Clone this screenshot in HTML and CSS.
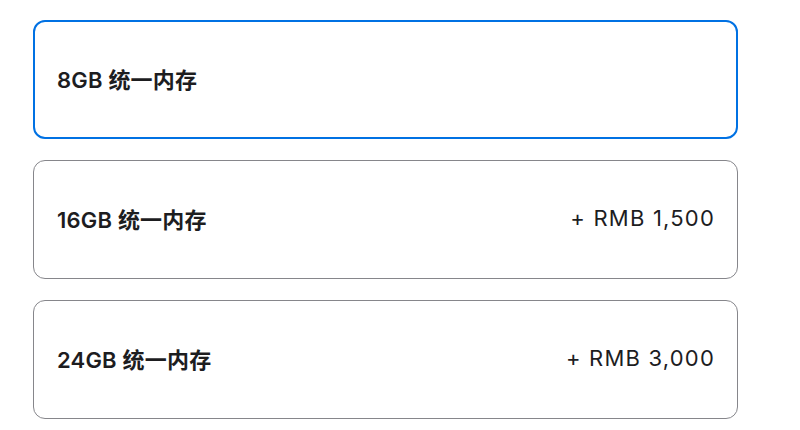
FILE: index.html
```html
<!DOCTYPE html>
<html lang="zh-CN">
<head>
    <meta charset="utf-8">
    <title>统一内存</title>
    <link rel="stylesheet" href="styles.css">
</head>
<body>
    <main class="options">
        <label class="option selected">
            <span class="option-name">8GB 统一内存</span>
        </label>
        <label class="option">
            <span class="option-name">16GB 统一内存</span>
            <span class="option-price">+ RMB 1,500</span>
        </label>
        <label class="option">
            <span class="option-name">24GB 统一内存</span>
            <span class="option-price">+ RMB 3,000</span>
        </label>
    </main>
</body>
</html>
```

FILE: styles.css
```css
body {
    margin: 0;
    background: #fff;
    color: #1d1d1f;
    font-family: Inter, "Noto Sans CJK SC", sans-serif;
}

.options {
    display: flex;
    flex-direction: column;
    gap: 21px;
    width: 705px;
    padding: 20px 0 0 33px;
}

.option {
    box-sizing: border-box;
    height: 119px;
    display: flex;
    align-items: center;
    justify-content: space-between;
    padding: 0 23px 4px;
    border: 1px solid #86868b;
    border-radius: 12px;
    font-size: 22px;
}

.option.selected {
    border: 2px solid #0071e3;
    padding: 0 22px 4px;
}

.option-name {
    font-weight: 600;
    letter-spacing: 0.2px;
}

.option-price {
    font-weight: 400;
    letter-spacing: 1.2px;
    margin-right: -1px;
}
```
